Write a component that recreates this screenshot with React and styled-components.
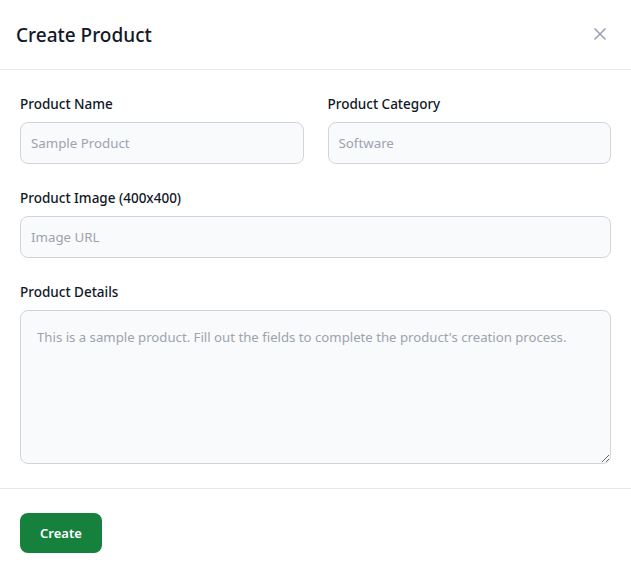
import styled, { createGlobalStyle } from "styled-components";

const GlobalStyle = createGlobalStyle`
  html, body {
    margin: 0;
    padding: 0;
    background: #ffffff;
  }
  body {
    font-family: "Noto Sans", "Open Sans", sans-serif;
    color: #111827;
  }
  * {
    box-sizing: border-box;
  }
`;

const Modal = styled.div`
  width: 631px;
  background: #ffffff;
  display: flex;
  flex-direction: column;
`;

const Header = styled.div`
  flex-shrink: 0;
  display: flex;
  align-items: center;
  justify-content: space-between;
  height: 70px;
  padding: 0 19px 0 16px;
  border-bottom: 1px solid #e5e7eb;
`;

const Title = styled.h3`
  margin: 0;
  font-size: 19px;
  font-weight: 500;
  color: #111827;
  line-height: 28px;
`;

const CloseButton = styled.button`
  display: flex;
  align-items: center;
  justify-content: center;
  width: 24px;
  height: 24px;
  padding: 0;
  margin-top: -2px;
  border: none;
  background: transparent;
  color: #9ca3af;
  cursor: pointer;
`;

const Body = styled.div`
  padding: 24px 20px;
  display: flex;
  flex-direction: column;
  gap: 24px;
  border-bottom: 1px solid #e5e7eb;
`;

const Row = styled.div`
  display: grid;
  grid-template-columns: 1fr 1fr;
  gap: 24px;
`;

const Field = styled.div`
  display: flex;
  flex-direction: column;
`;

const Label = styled.label`
  display: block;
  font-size: 13.5px;
  font-weight: 500;
  line-height: 20px;
  margin-bottom: 8px;
  color: #111827;
`;

const Input = styled.input`
  width: 100%;
  height: 42px;
  padding: 0 10px;
  font-family: inherit;
  font-size: 13.3px;
  color: #111827;
  background: #f9fafb;
  border: 1px solid #d1d5db;
  border-radius: 8px;
  outline: none;

  &::placeholder {
    color: #9ca3af;
  }
`;

const TextArea = styled.textarea`
  width: 100%;
  height: 154px;
  padding: 16px;
  font-family: inherit;
  font-size: 13.2px;
  line-height: 20px;
  color: #111827;
  background: #f9fafb;
  border: 1px solid #d1d5db;
  border-radius: 8px;
  outline: none;
  display: block;

  &::placeholder {
    color: #9ca3af;
  }
`;

const Footer = styled.div`
  padding: 24px 20px 20px;
  display: flex;
  align-items: center;
`;

const PrimaryButton = styled.button`
  height: 40px;
  padding: 0 20px;
  font-family: inherit;
  font-size: 13px;
  font-weight: 600;
  color: #ffffff;
  background: #16803d;
  border: none;
  border-radius: 8px;
  cursor: pointer;
`;

function CloseIcon() {
  return (
    <svg width="12" height="12" viewBox="0 0 12 12" fill="none">
      <path
        d="M1 1L11 11M11 1L1 11"
        stroke="currentColor"
        strokeWidth="1.7"
        strokeLinecap="round"
      />
    </svg>
  );
}

function App() {
  return (
    <>
      <GlobalStyle />
      <Modal>
        <Header>
          <Title>Create Product</Title>
          <CloseButton aria-label="Close">
            <CloseIcon />
          </CloseButton>
        </Header>
        <Body>
          <Row>
            <Field>
              <Label>Product Name</Label>
              <Input type="text" placeholder="Sample Product" />
            </Field>
            <Field>
              <Label>Product Category</Label>
              <Input type="text" placeholder="Software" />
            </Field>
          </Row>
          <Field>
            <Label>Product Image (400x400)</Label>
            <Input type="text" placeholder="Image URL" />
          </Field>
          <Field>
            <Label>Product Details</Label>
            <TextArea placeholder="This is a sample product. Fill out the fields to complete the product's creation process." />
          </Field>
        </Body>
        <Footer>
          <PrimaryButton>Create</PrimaryButton>
        </Footer>
      </Modal>
    </>
  );
}

export default App;
